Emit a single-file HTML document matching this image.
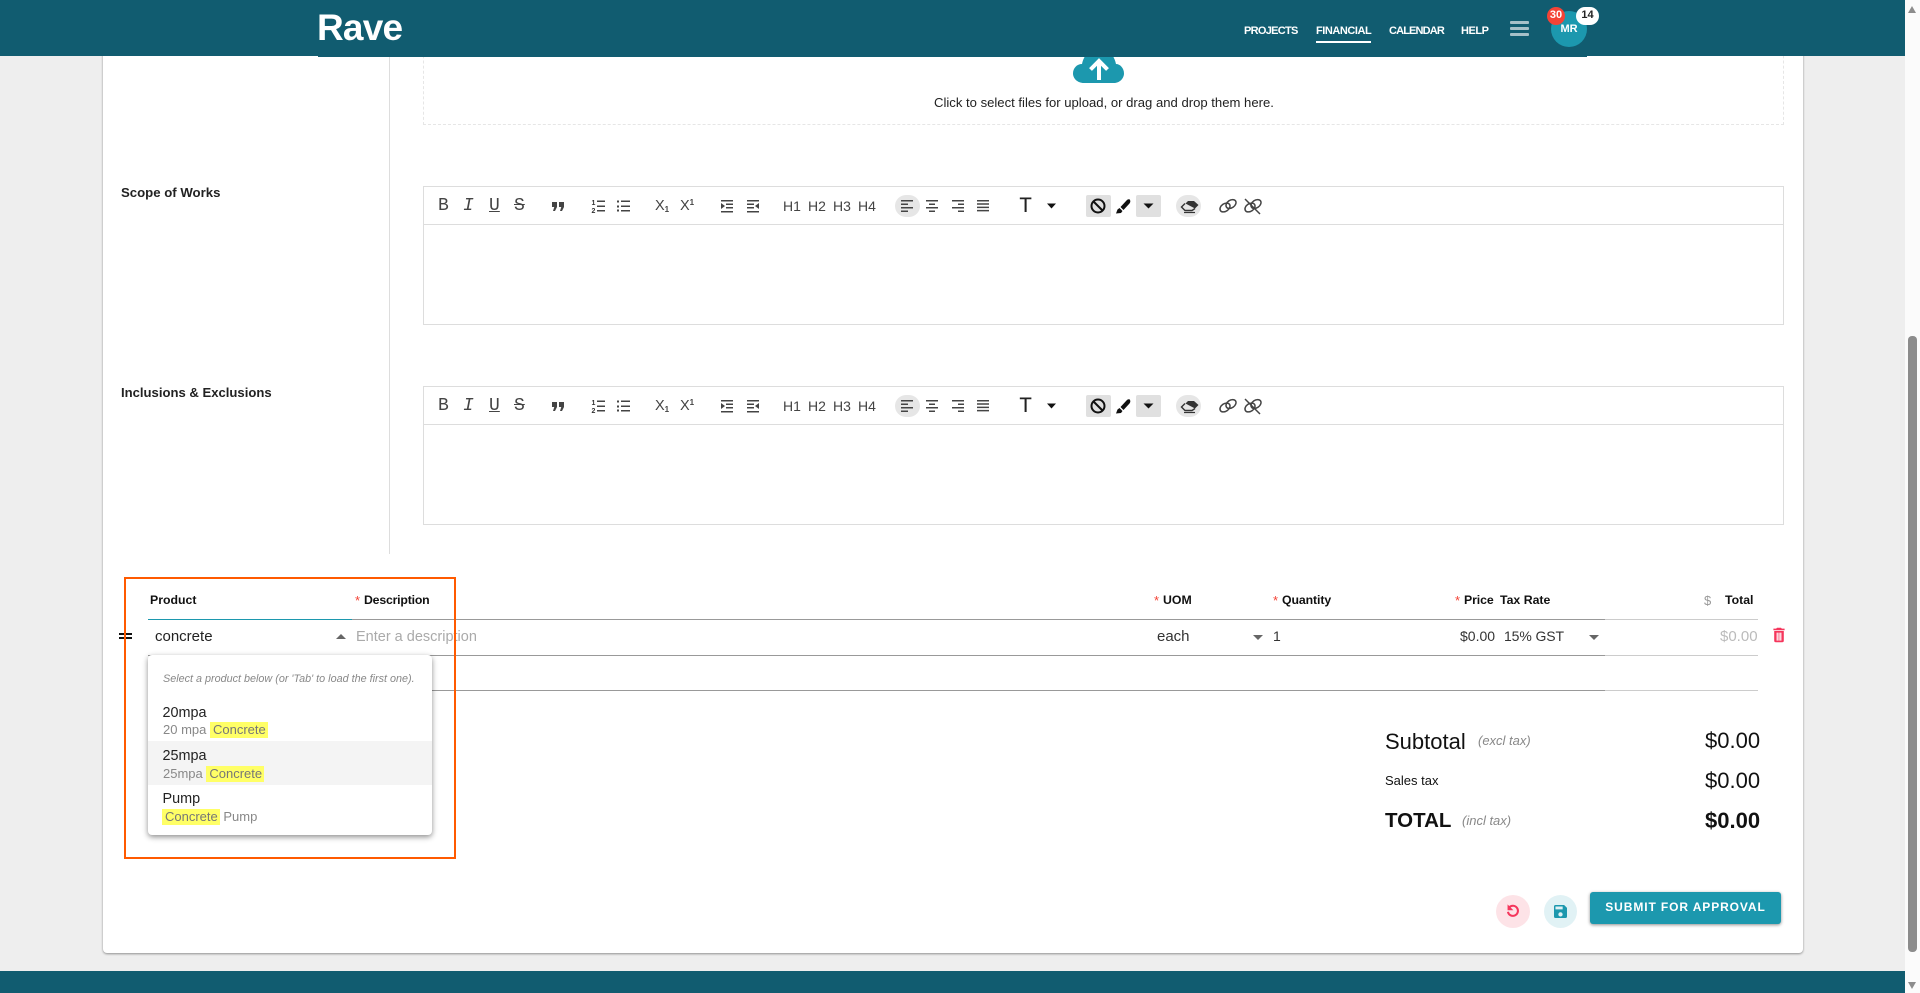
<!DOCTYPE html>
<html><head><meta charset="utf-8"><style>
html,body{margin:0;padding:0;width:1920px;height:993px;overflow:hidden;background:#eee;font-family:"Liberation Sans",sans-serif;color:#000}
.a{position:absolute}
.t{position:absolute;white-space:nowrap;line-height:20px;height:20px}
.tb{position:absolute;left:423px;width:1361px;height:139px;box-sizing:border-box;border:1px solid #ddd;background:#fff}
.tb .sep{position:absolute;left:0;right:0;top:37px;height:1px;background:#ddd}
.ic{position:absolute;left:-1px;top:-1px}
.x{position:absolute;white-space:nowrap;line-height:20px;color:#444;top:9px}
.m{font:18px/20px 'Liberation Mono',monospace;color:#444}
.h{font-size:12.3px;font-weight:bold;color:#111;top:590px}
.st{color:#f44336;font-size:13px;top:591px}
.l{position:absolute;height:1px}
.item{font-size:14.4px;color:#222}
.sub{font-size:13px;color:#888}
.nav{font-size:11px;font-weight:bold;color:#fff;letter-spacing:-.45px;top:21px}
mark{background:#ffff66;color:#777;padding:0 2px 1px 3px}
</style></head><body>

<div class="a" style="left:103px;top:0;width:1700px;height:953px;background:#fff;border-radius:4px;box-shadow:0 1px 2px rgba(0,0,0,.4)"></div>

<div class="a" style="left:389px;top:56px;width:1px;height:498px;background:#ddd"></div>
<div class="a" style="left:423px;top:40px;width:1361px;height:85px;box-sizing:border-box;border:1px dashed #e6e6e6"></div>
<svg class="a" style="left:1070px;top:50px" width="60" height="36" viewBox="0 0 60 36">
<path d="M14 33C7 33 3 28 3 23.500 3 18 7 14 12 14 14 4 22-4 29-4s15 8 17 18c4 0 8 4 8 9.500 0 4.500-4 9.500-10 9.500z" fill="#1c98ae"/>
<path d="M29 30V11M20.500 19.500L29 11l8.500 8.500" stroke="#fff" stroke-width="4" fill="none"/>
</svg>
<div class="t" style="left:934px;top:93px;font-size:13.1px;color:#222">Click to select files for upload, or drag and drop them here.</div>

<div class="t" style="left:121px;top:183px;font-size:13.2px;font-weight:bold;color:#222">Scope of Works</div>
<div class="t" style="left:121px;top:383px;font-size:13.1px;font-weight:bold;color:#222">Inclusions &amp; Exclusions</div>

<svg width="0" height="0" style="position:absolute"><g id="tbi" fill="#444" stroke="none">
<rect x="895" y="195" width="25" height="22" rx="11" fill="#e6e6e6"/>
<rect x="1086" y="195" width="25" height="22" rx="2" fill="#e0e0e0"/>
<rect x="1136" y="195" width="25" height="22" rx="2" fill="#e0e0e0"/>
<rect x="1176" y="195" width="25" height="22" rx="11" fill="#e6e6e6"/>
<path d="M552 202h5v5l-2 4h-2l1.300-4H552zM559 202h5v5l-2 4h-2l1.300-4H559z"/>
<text x="591.500" y="205" font-size="7" font-weight="bold" font-family="Liberation Sans" fill="#333">1</text>
<text x="591.500" y="213" font-size="7" font-weight="bold" font-family="Liberation Sans" fill="#333">2</text>
<path d="M597 200.500h8v1.500h-8zM597 205.500h8v1.500h-8zM597 210h8v1.500h-8z"/>
<path d="M617 200.500h2v2h-2zM617 205.500h2v2h-2zM617 209.500h2v2h-2zM621 200.500h9v1.500h-9zM621 205.500h9v1.500h-9zM621 210h9v1.500h-9z"/>
<path d="M721 200h12v1.500h-12zM726 203.500h7v1.500h-7zM726 207h7v1.500h-7zM721 211h12v1.500h-12zM721 203l4 3-4 3z"/>
<path d="M747 200h12v1.500h-12zM747 203.500h7v1.500h-7zM747 207h7v1.500h-7zM747 211h12v1.500h-12zM759 203l-4 3 4 3z"/>
<path d="M901 200h12v1.500h-12zM901 203.500h7v1.500h-7zM901 207h12v1.500h-12zM901 210.500h7v1.500h-7z"/>
<path d="M926 200h12v1.500h-12zM929 203.500h6v1.500h-6zM926 207h12v1.500h-12zM929 210.500h6v1.500h-6z"/>
<path d="M952 200h12v1.500h-12zM958 203.500h6v1.500h-6zM952 207h12v1.500h-12zM958 210.500h6v1.500h-6z"/>
<path d="M977 200h12v1.500h-12zM977 203.300h12v1.500h-12zM977 206.600h12v1.500h-12zM977 209.900h12v1.500h-12z"/>
<path d="M1047 203.500h9l-4.500 5z" fill="#111"/>
<path d="M1143.500 203.500h10l-5 5z" fill="#111"/>
<circle cx="1098" cy="206" r="6.500" fill="none" stroke="#111" stroke-width="2"/>
<path d="M1093.500 201.500l9 9" stroke="#111" stroke-width="2"/>
<path d="M1116 213.500l1.500-4 2-1.500 3 3-1.500 2zM1120.500 207l6-6.500c1.500-1.500 3-1.500 3.500-.500s.5 2-.5 3.500l-6 6.500z" fill="#111"/>
<path d="M1188 201h6l4.500 4-3.500 3.500-9.500-5z" fill="#333"/>
<path d="M1185 203.500l-3.500 3.500 3.500 3.500h7l3-2" fill="none" stroke="#333" stroke-width="1.400"/>
<path d="M1184 212.500h11" stroke="#333" stroke-width="1.200"/>
<g fill="none" stroke="#444" stroke-width="1.500">
<ellipse cx="1225" cy="207.500" rx="5.500" ry="3.800" transform="rotate(-35 1225 207.500)"/>
<ellipse cx="1231" cy="204" rx="5.500" ry="3.800" transform="rotate(-35 1231 204)"/>
<ellipse cx="1250" cy="207.500" rx="5.500" ry="3.800" transform="rotate(-35 1250 207.500)"/>
<ellipse cx="1256" cy="204" rx="5.500" ry="3.800" transform="rotate(-35 1256 204)"/>
<path d="M1245 199l15 15"/>
</g>
</g></svg>

<div class="tb" style="top:186px"><div class="sep"></div>
<svg class="ic" width="1361" height="38" viewBox="423 186 1361 38"><use href="#tbi"/></svg>
<span class="x m" style="left:14px">B</span>
<span class="x m" style="left:39px;font-style:italic">I</span>
<span class="x m" style="left:65px;text-decoration:underline">U</span>
<span class="x m" style="left:90px;text-decoration:line-through">S</span>
<span class="x" style="left:231px;font-size:14.5px">X<sub style="font-size:8px;line-height:0;vertical-align:-2px;font-weight:bold">1</sub></span>
<span class="x" style="left:256px;font-size:14.5px">X<sup style="font-size:8px;line-height:0;vertical-align:5px;font-weight:bold">1</sup></span>
<span class="x" style="left:359px;font-size:14px">H1</span><span class="x" style="left:384px;font-size:14px">H2</span><span class="x" style="left:409px;font-size:14px">H3</span><span class="x" style="left:434px;font-size:14px">H4</span>
<span class="x" style="left:595px;top:10px;font:22px/20px 'Liberation Mono',monospace;color:#222">T</span>
</div>

<div class="tb" style="top:386px"><div class="sep"></div>
<svg class="ic" width="1361" height="38" viewBox="423 186 1361 38"><use href="#tbi"/></svg>
<span class="x m" style="left:14px">B</span>
<span class="x m" style="left:39px;font-style:italic">I</span>
<span class="x m" style="left:65px;text-decoration:underline">U</span>
<span class="x m" style="left:90px;text-decoration:line-through">S</span>
<span class="x" style="left:231px;font-size:14.5px">X<sub style="font-size:8px;line-height:0;vertical-align:-2px;font-weight:bold">1</sub></span>
<span class="x" style="left:256px;font-size:14.5px">X<sup style="font-size:8px;line-height:0;vertical-align:5px;font-weight:bold">1</sup></span>
<span class="x" style="left:359px;font-size:14px">H1</span><span class="x" style="left:384px;font-size:14px">H2</span><span class="x" style="left:409px;font-size:14px">H3</span><span class="x" style="left:434px;font-size:14px">H4</span>
<span class="x" style="left:595px;top:10px;font:22px/20px 'Liberation Mono',monospace;color:#222">T</span>
</div>

<!-- table -->
<div class="t h" style="left:150px">Product</div>
<div class="t st" style="left:355px">*</div><div class="t h" style="left:364px;letter-spacing:-.2px">Description</div>
<div class="t st" style="left:1154px">*</div><div class="t h" style="left:1163px">UOM</div>
<div class="t st" style="left:1273px">*</div><div class="t h" style="left:1282px;letter-spacing:-.1px">Quantity</div>
<div class="t st" style="left:1455px">*</div><div class="t h" style="left:1464px;letter-spacing:-.1px">Price</div>
<div class="t h" style="left:1500px">Tax Rate</div>
<div class="t" style="left:1704px;top:591px;font-size:13px;color:#999">$</div>
<div class="t h" style="left:1725px">Total</div>

<div class="l" style="left:148px;top:619px;width:204px;background:#1c98ae"></div>
<div class="l" style="left:352px;top:619px;width:1253px;background:#999"></div>
<div class="l" style="left:1605px;top:619px;width:153px;background:#ccc"></div>
<div class="l" style="left:148px;top:655px;width:1457px;background:#999"></div>
<div class="l" style="left:1605px;top:655px;width:153px;background:#ccc"></div>
<div class="l" style="left:148px;top:690px;width:1457px;background:#999"></div>
<div class="l" style="left:1605px;top:690px;width:153px;background:#ccc"></div>

<div class="a" style="left:119px;top:633px;width:13px;height:2px;background:#111"></div>
<div class="a" style="left:119px;top:637px;width:13px;height:2px;background:#111"></div>
<div class="t" style="left:155px;top:627px;font-size:15px;color:#222">concrete</div>
<div class="a" style="left:336px;top:634px;width:0;height:0;border:5px solid transparent;border-top:0;border-bottom-color:#666"></div>
<div class="t" style="left:356px;top:627px;font-size:14.5px;color:#aaa">Enter a description</div>
<div class="t" style="left:1157px;top:627px;font-size:15px;color:#333">each</div>
<div class="a" style="left:1253px;top:635px;width:0;height:0;border:5px solid transparent;border-bottom:0;border-top-color:#666"></div>
<div class="t" style="left:1273px;top:626px;font-size:14px;color:#333">1</div>
<div class="t" style="left:1460px;top:626px;font-size:14px;color:#333">$0.00</div>
<div class="t" style="left:1504px;top:626px;font-size:14px;letter-spacing:-.1px;color:#333">15% GST</div>
<div class="a" style="left:1589px;top:635px;width:0;height:0;border:5px solid transparent;border-bottom:0;border-top-color:#666"></div>
<div class="t" style="left:1720px;top:627px;font-size:15px;color:#bbb">$0.00</div>
<svg class="a" style="left:1771px;top:627px" width="16" height="16" viewBox="3 2 18 20"><path fill="#f5365c" d="M19 4h-3.500l-1-1h-5l-1 1H5v2h14zM6 19a2 2 0 0 0 2 2h8a2 2 0 0 0 2-2V7H6zM9 9h1.500v10H9zM11.300 9h1.500v10h-1.500zM13.500 9H15v10h-1.500z" fill-rule="evenodd"/></svg>

<!-- dropdown -->
<div class="a" style="left:148px;top:655px;width:284px;height:180px;background:#fff;border-radius:4px;box-shadow:0 2px 6px rgba(0,0,0,.45)"></div>
<div class="a" style="left:148px;top:741px;width:284px;height:44px;background:#f4f4f4"></div>
<div class="t" style="left:163px;top:669px;font-size:10.8px;font-style:italic;color:#888">Select a product below (or 'Tab' to load the first one).</div>
<div class="t item" style="left:162.500px;top:703px">20mpa</div>
<div class="t sub" style="left:163px;top:720px">20 mpa <mark>Concrete</mark></div>
<div class="t item" style="left:162.500px;top:746px">25mpa</div>
<div class="t sub" style="left:163px;top:764px">25mpa <mark>Concrete</mark></div>
<div class="t item" style="left:162.500px;top:789px">Pump</div>
<div class="t sub" style="left:162px;top:807px"><mark>Concrete</mark> Pump</div>

<div class="a" style="left:124px;top:577px;width:332px;height:282px;box-sizing:border-box;border:2px solid #ff5a00"></div>

<!-- totals -->
<div class="t" style="left:1385px;top:732px;font-size:22px;color:#111">Subtotal</div>
<div class="t" style="left:1478px;top:731px;font-size:13px;font-style:italic;color:#888">(excl tax)</div>
<div class="t" style="left:1705px;top:731px;font-size:22px;color:#111">$0.00</div>
<div class="t" style="left:1385px;top:771px;font-size:13px;color:#111">Sales tax</div>
<div class="t" style="left:1705px;top:771px;font-size:22px;color:#111">$0.00</div>
<div class="t" style="left:1385px;top:811px;font-size:20.500px;font-weight:bold;color:#111">TOTAL</div>
<div class="t" style="left:1462px;top:811px;font-size:13px;font-style:italic;color:#888">(incl tax)</div>
<div class="t" style="left:1705px;top:811px;font-size:22px;font-weight:bold;color:#111">$0.00</div>

<div class="a" style="left:1496px;top:895px;width:34px;height:33px;border-radius:50%;background:#fde3e7"></div>
<svg class="a" style="left:1506px;top:904px" width="14" height="14" viewBox="0 0 18 18"><path d="M4 4.500a6.500 6.500 0 1 1-1.500 5.500" fill="none" stroke="#f5365c" stroke-width="2.600"/><path d="M2 0.500v7.500h7.500z" fill="#f5365c"/></svg>
<div class="a" style="left:1544px;top:895px;width:33px;height:33px;border-radius:50%;background:#e1f2f5"></div>
<svg class="a" style="left:1554px;top:905px" width="13" height="13" viewBox="3 3 18 18"><path fill="#1c98ae" d="M15 9H5V5h10zM12 19a3 3 0 1 1 0-6 3 3 0 0 1 0 6zM17 3H5C3.900 3 3 3.900 3 5v14a2 2 0 0 0 2 2h14a2 2 0 0 0 2-2V7z" fill-rule="evenodd"/></svg>
<div class="a" style="left:1590px;top:892px;width:191px;height:32px;background:#1c98ae;border-radius:3px;box-shadow:0 1px 3px rgba(0,0,0,.45);color:#fff;font-size:12px;font-weight:bold;letter-spacing:.9px;line-height:31px;text-align:center;white-space:nowrap">SUBMIT FOR APPROVAL</div>

<!-- footer -->
<div class="a" style="left:0;top:971px;width:1905px;height:22px;background:#115c70"></div>

<!-- header -->
<div class="a" style="left:0;top:0;width:1905px;height:56px;background:#115c70"></div>
<div class="a" style="left:318px;top:0;width:1269px;height:57px;background:#115c70"></div>
<div class="t" style="left:317px;top:8px;height:40px;line-height:40px;font-size:37px;font-weight:bold;letter-spacing:-.8px;color:#fff">Rave</div>
<div class="t nav" style="left:1244px;letter-spacing:-.7px">PROJECTS</div>
<div class="t nav" style="left:1316px">FINANCIAL</div>
<div class="a" style="left:1316px;top:41px;width:55px;height:2px;background:#fff"></div>
<div class="t nav" style="left:1389px;letter-spacing:-.85px">CALENDAR</div>
<div class="t nav" style="left:1461px">HELP</div>
<div class="a" style="left:1510px;top:21px;width:19px;height:3px;border-radius:1px;background:#a6c0c8"></div>
<div class="a" style="left:1510px;top:27px;width:19px;height:3px;border-radius:1px;background:#a6c0c8"></div>
<div class="a" style="left:1510px;top:33px;width:19px;height:3px;border-radius:1px;background:#a6c0c8"></div>
<div class="a" style="left:1551px;top:11px;width:36px;height:36px;border-radius:50%;background:#1c98ae;color:#fff;font-size:11px;font-weight:bold;line-height:36px;text-align:center">MR</div>
<div class="a" style="left:1547px;top:7px;width:18px;height:18px;border-radius:50%;background:#f44336;color:#fff;font-size:11px;font-weight:bold;line-height:16px;text-align:center">30</div>
<div class="a" style="left:1576px;top:7px;width:23px;height:18px;border-radius:9px;background:#fff;color:#222;font-size:11px;font-weight:bold;line-height:16px;text-align:center">14</div>

<!-- scrollbar -->
<div class="a" style="left:1905px;top:0;width:15px;height:993px;background:#fbfbfb"></div>
<div class="a" style="left:1908px;top:336px;width:9px;height:616px;border-radius:4px;background:#8c8c8c"></div>
<div class="a" style="left:1908px;top:6px;width:0;height:0;border:4.500px solid transparent;border-top:0;border-bottom:7px solid #8c8c8c"></div>
<div class="a" style="left:1908px;top:982px;width:0;height:0;border:4.500px solid transparent;border-bottom:0;border-top:7px solid #8c8c8c"></div>
</body></html>
